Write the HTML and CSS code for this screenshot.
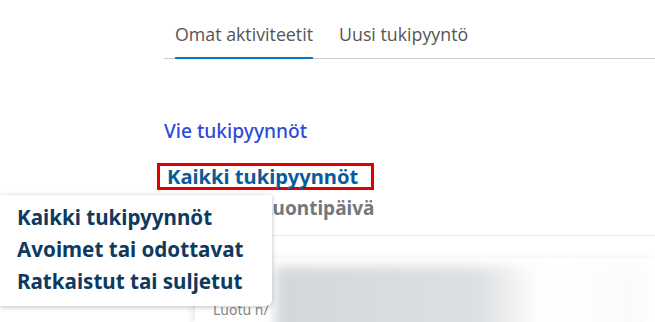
FILE: index.html
```html
<!DOCTYPE html>
<html>
<head>
    <link rel="stylesheet" href="styles.css">
</head>
<body>
<div class="page">
    <div class="tabs">
        <div class="tab active">Omat aktiviteetit</div>
        <div class="tab">Uusi tukipyyntö</div>
    </div>

    <a class="export" href="#">Vie tukipyynnöt</a>

    <div class="filter">
        <span class="filter-title">Kaikki tukipyynnöt</span>
    </div>

    <div class="sort">Luontipäivä</div>

    <div class="card">
        <div class="card-blur"></div>
        <div class="card-meta">Luotu n/</div>
    </div>
</div>

<div class="menu">
    <div class="menu-item">Kaikki tukipyynnöt</div>
    <div class="menu-item">Avoimet tai odottavat</div>
    <div class="menu-item">Ratkaistut tai suljetut</div>
</div>
</body>
</html>
```

FILE: styles.css
```css
body {
    margin: 0;
    background-color: #FFFFFF;
    font-family: "Noto Sans", sans-serif;
    overflow: hidden;
}
.page {
    padding-left: 164px;
}
.tabs {
    display: flex;
    gap: 26px;
    padding-left: 11px;
    padding-top: 22px;
    border-bottom: 1px solid #CCCCCC;
}
.tab {
    font-family: "Open Sans", sans-serif;
    font-size: 17.8px;
    line-height: 24px;
    color: #555555;
    padding-bottom: 12px;
}
.tab.active {
    border-bottom: 2px solid #0A74C7;
    margin-bottom: -1px;
    padding-bottom: 10px;
}
.export {
    display: block;
    margin-top: 60px;
    font-size: 19.2px;
    font-weight: 500;
    color: #2F4BD6;
    text-decoration: none;
    line-height: 24px;
}
.filter {
    display: inline-flex;
    margin-top: 20px;
    margin-left: -7px;
    padding: 0 13px 0 7px;
    height: 21px;
    border: 3px solid #E00000;
    align-items: flex-end;
}
.filter-title {
    font-size: 20.2px;
    font-weight: 700;
    color: #0B5A99;
    line-height: 24px;
    margin-bottom: -1px;
}
.sort {
    margin-top: 6px;
    font-size: 19px;
    font-weight: 700;
    color: #74777B;
    line-height: 24px;
    padding-bottom: 15px;
    border-bottom: 1px solid #EEEEEE;
    padding-left: 98px;
}
.card {
    position: relative;
    margin-left: 31px;
    margin-top: 22px;
    height: 64px;
    overflow: hidden;
    box-shadow: -4px 0 6px rgba(0, 0, 0, 0.08);
}
.card-blur {
    margin-left: 80px;
    margin-top: 8px;
    width: 370px;
    height: 70px;
    background: linear-gradient(90deg, #D4D7DA 0%, #DDE0E2 55%, #FFFFFF 72%, #F9FAFA 100%);
    filter: blur(6px);
}
.card-meta {
    position: absolute;
    left: 18px;
    top: 42px;
    font-size: 14px;
    color: #888888;
}
.menu {
    position: absolute;
    left: 0;
    top: 195px;
    width: 272px;
    padding: 6px 0 9px 0;
    background: #FFFFFF;
    border-radius: 0 0 6px 0;
    box-shadow: 0 1px 5px rgba(0, 0, 0, 0.25);
}
.menu-item {
    padding-left: 17px;
    font-size: 20.6px;
    font-weight: 700;
    color: #0E3A60;
    line-height: 32px;
}
```
